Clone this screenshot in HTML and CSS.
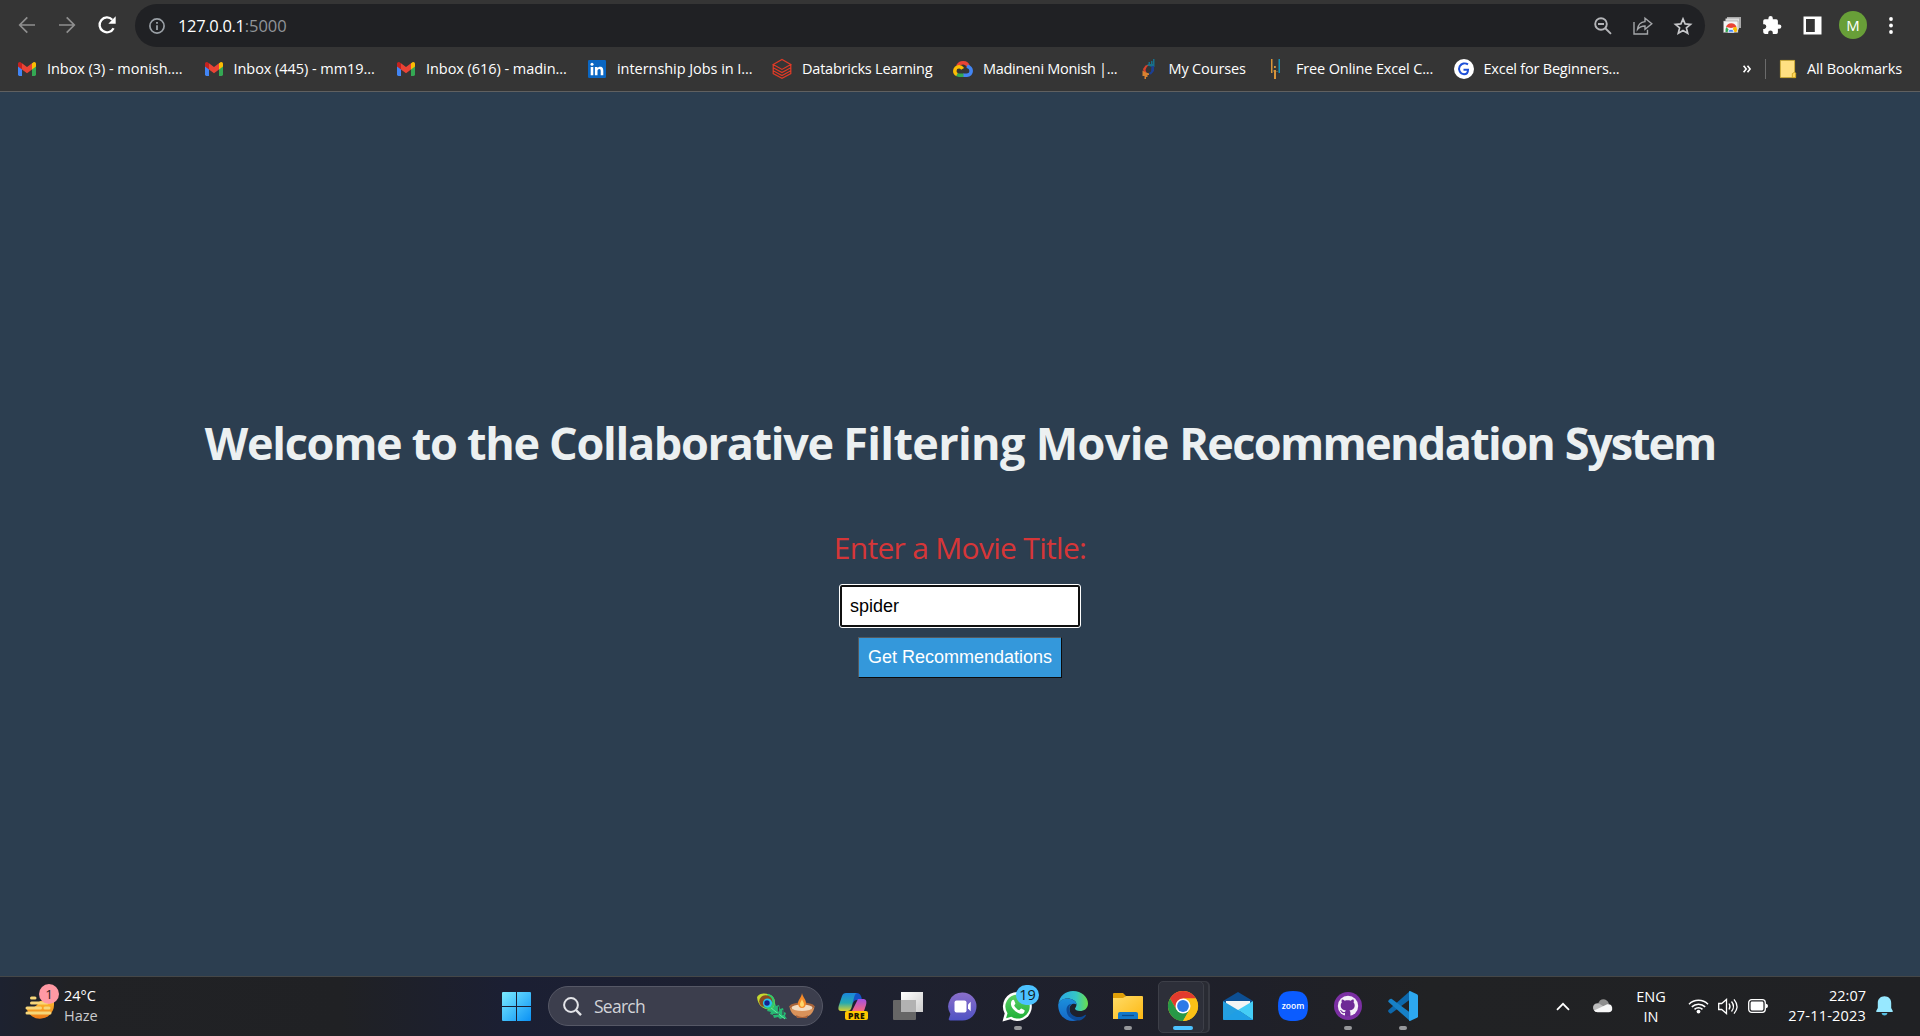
FILE: index.html
```
<!DOCTYPE html>
<html lang="en">
<head>
<meta charset="utf-8">
<title>Movie Recommendation System</title>
<link rel="stylesheet" href="styles.css">
</head>
<body>
<svg class="defs" width="0" height="0" aria-hidden="true">
  <defs>
    <symbol id="gmail" viewBox="0 0 18 14">
      <path fill="#4285f4" d="M0 3.5 4 6.5V14H1.4A1.4 1.4 0 0 1 0 12.600z"/>
      <path fill="#34a853" d="M18 3.500 14 6.500V14h2.600a1.400 1.400 0 0 0 1.400-1.400z"/>
      <path fill="#fbbc04" d="M14 1.200 15.200.4C16.500-.5 18 .4 18 1.900V4.500l-4 3z"/>
      <path fill="#ea4335" d="M4 7.500V1.200L9 5l5-3.800v6.300L9 11.200z"/>
      <path fill="#c5221f" d="M0 1.900C0 .4 1.500-.5 2.800.4L4 1.200v6.300l-4-3z"/>
    </symbol>
  </defs>
</svg>

<header class="browser">
  <div class="toolbar">
    <div class="nav">
      <svg width="18" height="18" viewBox="0 0 18 18" fill="none" stroke="#8f8f8f" stroke-width="1.7"><path d="M17 9H2M9.300 1.300 1.700 9l7.600 7.700"/></svg>
      <svg width="18" height="18" viewBox="0 0 18 18" fill="none" stroke="#8f8f8f" stroke-width="1.700"><path d="M1 9h15M8.700 1.300 16.300 9l-7.600 7.700"/></svg>
      <svg width="18" height="18" viewBox="0 0 18 18"><path d="M15.600 12.200A7.400 7.400 0 1 1 14.300 3.700" fill="none" stroke="#fff" stroke-width="2.300"/><path d="M17.700.3v7.400h-7.400z" fill="#fff"/></svg>
    </div>
    <div class="omnibox">
      <svg class="info" width="16" height="16" viewBox="0 0 16 16"><circle cx="8" cy="8" r="7.100" fill="none" stroke="#9aa0a6" stroke-width="1.700"/><path d="M7.100 7.200h1.800v4.800H7.100zM7.100 4h1.800v1.800H7.100z" fill="#9aa0a6"/></svg>
      <div class="url"><span class="host">127.0.0.1</span><span class="port">:5000</span></div>
      <div class="actions">
        <svg width="18" height="18" viewBox="0 0 18 18" fill="none" stroke="#b4b5b8" stroke-width="1.900"><circle cx="7" cy="7" r="5.800"/><path d="m11.300 11.300 5.700 5.600M4 7h6"/></svg>
        <svg width="20" height="18" viewBox="0 0 20 18" fill="none" stroke="#a4a6a9" stroke-width="1.400"><path d="M1 5v12h13.500v-4.300M4.500 12.300c.5-4.700 3-7.300 7.500-7.700V1.200L18.800 6.800 12 12.300V9c-3.500 0-5.700 1-7.500 3.300z"/></svg>
        <svg width="18" height="18" viewBox="0 0 18 18" fill="none" stroke="#c6c7ca" stroke-width="1.700"><path d="m9 1.900 2.100 5 5.400.5-4.100 3.500 1.300 5.300L9 13.400l-4.700 2.800 1.300-5.300L1.500 7.400l5.400-.5z"/></svg>
      </div>
    </div>
    <div class="extensions">
      <svg width="18" height="18" viewBox="0 0 18 18"><path fill="#aaa" d="M4 1h14v11H4z"/><path fill="#ddd" d="M2.500 2.500H16v11H2.500z"/><path fill="#f4f4f4" stroke="#888" stroke-width=".5" d="M.5 5H15v11.500H.5z"/><path fill="#ea4335" d="M3 11a5.500 5.500 0 0 1 10.500 0L8 12z"/><path fill="#34a853" d="M2.500 16a6 6 0 0 1 1-5l4 5z"/><path fill="#fbbc04" d="M8 16l3-5h2.500a6 6 0 0 1 0 5z"/><path fill="#4285f4" stroke="#fff" stroke-width=".8" d="M5 16.200a3 3 0 0 1 6 0z"/></svg>
      <svg width="18" height="18" viewBox="0 0 18 18"><path fill="#fff" d="M16.200 8.400h-1.300V5a1.700 1.700 0 0 0-1.700-1.700H9.800V2.200a2.200 2.200 0 0 0-4.400 0v1.100H1.900A1.700 1.700 0 0 0 .2 5v3.200h1.200a2.400 2.400 0 0 1 0 4.700H.2v3.200A1.800 1.800 0 0 0 2 17.900h3.200v-1.200a2.300 2.300 0 0 1 4.600 0v1.200h3.400a1.700 1.700 0 0 0 1.700-1.700v-3.400h1.300a2.200 2.200 0 0 0 0-4.400z"/></svg>
      <svg width="19" height="19" viewBox="0 0 19 19"><path fill="#fff" fill-rule="evenodd" d="M.5.500h18v18H.5zM3 3h8.800v13H3z"/></svg>
      <div class="avatar">M</div>
      <svg width="4" height="17" viewBox="0 0 4 17" fill="#fff"><circle cx="2" cy="2" r="1.900"/><circle cx="2" cy="8.500" r="1.900"/><circle cx="2" cy="15" r="1.900"/></svg>
    </div>
  </div>

  <div class="bookmarks">
    <ul class="links">
      <li><svg width="18" height="14"><use href="#gmail"/></svg><span>Inbox (3) - monish....</span></li>
      <li><svg width="18" height="14"><use href="#gmail"/></svg><span>Inbox (445) - mm19...</span></li>
      <li><svg width="18" height="14"><use href="#gmail"/></svg><span>Inbox (616) - madin...</span></li>
      <li><svg width="18" height="18" viewBox="0 0 18 18"><rect width="18" height="18" rx="1.200" fill="#0a66c2"/><g fill="#fff"><circle cx="4" cy="4.200" r="1.500"/><path d="M2.700 6.900h2.600v8.400H2.700zM6.900 6.900h2.500v1.200c.5-.8 1.400-1.400 2.700-1.400 2.700 0 3.200 1.800 3.200 4v4.600h-2.600v-4.100c0-1 0-2.200-1.400-2.200-1.300 0-1.800 1-1.800 2.200v4.100H6.900z"/></g></svg><span>internship Jobs in I...</span></li>
      <li><svg width="20" height="20" viewBox="0 0 20 20" fill="none" stroke="#e03a26" stroke-width="1.200"><path d="m1.200 5.500 8.800-5 8.800 5L10 10.400zM1.200 5.500v3.200L10 13.600l8.800-4.900V5.500M1.200 8.700v3L10 16.600l8.800-4.900v-3M1.200 11.700v2.900l8.800 4.800 8.800-4.800v-2.900"/></svg><span>Databricks Learning</span></li>
      <li><svg width="20" height="16" viewBox="0 0 20 16" fill="none" stroke-width="3.500"><path stroke="#ea4335" d="M4.700 5.200C6 2.800 8 1.700 10.300 1.800c2.300.1 4.200 1.400 4.900 3.500"/><path stroke="#4285f4" d="M14 5.200c2.500.8 4.200 2.500 4.200 4.800 0 2.500-1.700 4.200-4.200 4.200h-4"/><path stroke="#34a853" d="M10.500 14.200H6c-1 0-1.800-.2-2.500-.6"/><path stroke="#fbbc04" d="M4 13.500C2.500 12.800 1.800 11.500 1.800 10c0-2.200 1.900-4.200 4.200-4.200 1.700 0 2.800.7 3.600 2"/></svg><span>Madineni Monish |...</span></li>
      <li><svg width="20" height="20" viewBox="0 0 20 20"><path fill="#17708a" d="M9.500 3h1.500v2H9.500zM12 2h1.500v3H12zM14 0h1.500v6H14zM9 5h6.500v3L13 8l-3-1H7z"/><path fill="#1c3f93" d="M12.500 7H15v5l-3 3.500-3.500-.5 3.500-2.500z"/><path fill="#d9422b" d="M4 10l2.500-3.500L9.500 6l-2 2.500L6.500 11l1 2.500L5 14z"/><path fill="#d98230" d="M3.500 11.500 6 13l4 1.500v1.500H8.500v2H7v2H5.500v-3H3.500z"/></svg><span>My Courses</span></li>
      <li><svg width="20" height="20" viewBox="0 0 20 20"><path fill="#d9953a" d="M5 0h1.500v14H5zM8 11h2v9H8zM8 7h1.800v2H8z"/><path fill="#1791b5" d="M12.500 0H14v14h-1.500z"/><path fill="#665b43" d="M6.500 11H8v2H6.500zM10 12h2v1h-2z"/></svg><span>Free Online Excel C...</span></li>
      <li><svg width="20" height="20" viewBox="0 0 20 20"><circle cx="10" cy="10" r="10" fill="#fff"/><path d="M14 5.300C11 3.500 7.500 4.500 5.700 7.200 4 10.500 6 15 10 15.200c2.500 0 4-1.700 4-4.500H9.500" fill="none" stroke="#1d4fd7" stroke-width="2"/></svg><span>Excel for Beginners...</span></li>
    </ul>
    <svg class="overflow" width="8" height="8" viewBox="0 0 8 8" fill="none" stroke="#fff" stroke-width="1.600"><path d="m.6.700 2.600 3.300L.6 7.300M4.500.700 7.100 4 4.500 7.300"/></svg>
    <div class="all">
      <svg width="16" height="18" viewBox="0 0 16 18"><path fill="#ffe082" stroke="#d8b22e" stroke-width=".8" d="M.4.400h14.200v11.800l1 1v4.400H.4z"/><path fill="#ffd65a" stroke="#c79d16" stroke-width=".8" d="M12.300 17.600v-4l2.300-1.400 1 1v4.400z"/></svg>
      <span>All Bookmarks</span>
    </div>
  </div>
</header>

<main class="page">
  <h1>Welcome to the Collaborative <span class="loose">Filtering Movie</span> <span class="tight">Recommendation</span> <span class="tighter">System</span></h1>
  <form class="finder">
    <label for="title">Enter a Movie Title:</label>
    <input id="title" type="text" value="spider">
    <button type="button">Get Recommendations</button>
  </form>
</main>

<footer class="taskbar">
  <div class="weather">
    <div class="haze">
      <svg width="31" height="28" viewBox="0 0 31 28"><defs><linearGradient id="sun" x2="0" y2="1"><stop offset="0" stop-color="#fdbb2f"/><stop offset="1" stop-color="#ee7a16"/></linearGradient></defs><path fill="url(#sun)" d="M15 8h14v4a14 14 0 0 1-27.600 3H8l4-3z"/><path stroke="#f6d679" stroke-width="3" stroke-linecap="round" d="M6.500 5h3.500M6.500 10H22M2 15h13.500M20 15h4M2 20h23"/></svg>
      <span class="count">1</span>
    </div>
    <div class="lines"><span class="temp">24°C</span><span class="cond">Haze</span></div>
  </div>

  <div class="apps">
    <svg class="start" width="29" height="29" viewBox="0 0 29 29"><defs><linearGradient id="win" x2="1" y2="1"><stop offset="0" stop-color="#7bebff"/><stop offset="1" stop-color="#0a91f5"/></linearGradient></defs><path fill="url(#win)" d="M1 0h13v14H0V1q0-1 1-1zM15 0h13q1 0 1 1v13H15zM0 15h14v14H1q-1 0-1-1zM15 15h14v13q0 1-1 1H15z"/></svg>
    <div class="search">
      <svg width="19" height="19" viewBox="0 0 19 19" fill="none" stroke="#e3e4e8" stroke-width="2"><circle cx="8" cy="8" r="6.900"/><path d="m13 13 5 5.200" stroke-width="2.400"/></svg>
      <span>Search</span>
      <svg class="feather" width="31" height="27" viewBox="0 0 31 27"><path fill="#27b873" d="M14 9l5 1 1 3 3-1 1 4 3-1 1 4 2 1-1 3 2 3-4-1-3 1-2-2-4 1-1-3-3-1 1-2-4-1 1-2-3-2z"/><path fill="#c5d92f" d="M1 4C4-1 13 0 17 4c3 4 2 9-1 12C10 18 2 14 1 4z"/><path fill="#2fc86c" d="M12 .800c7 2 9 9 4 15.200-3 1-7 0-10-3z"/><ellipse cx="9.800" cy="8.200" rx="6.600" ry="6" fill="#8a4a1f"/><circle cx="11.500" cy="10" r="4.600" fill="#26c5e8"/><circle cx="11" cy="10" r="2.700" fill="#15208e"/><path d="m15 15 14 11" stroke="#5af09b" fill="none"/><path d="M22.500 13.500v5M27 17v5M17 21.500l6-.5" stroke="#3c3e4d" stroke-width="1.200" fill="none"/></svg>
      <svg class="diya" width="26" height="26" viewBox="0 0 26 26"><path fill="#d9925a" d="M.5 13C1 20 6 24.500 13 24.500S25 20 25.500 13z"/><path fill="#a65f38" d="M7 22c4 2.500 9 2.500 12 0l-1 3H8z"/><ellipse cx="13" cy="13.500" rx="12.500" ry="4" fill="#a96439"/><ellipse cx="13" cy="14.800" rx="10.500" ry="3.200" fill="#f3dcc1"/><path fill="#f68b29" d="M13 0c.7 4 4 6.500 4 10 0 3-1.500 5-4 5s-4-2-4-5c0-3 3.300-5 4-10z"/><path fill="#ffd76a" d="M13 6c.5 2 2 3.500 2 5.500 0 1.500-1 2.300-2 2.300s-2-.8-2-2.300C11 9.500 12.500 8 13 6z"/></svg>
    </div>
    <div class="app"><svg width="30" height="28" viewBox="0 0 30 28"><defs><linearGradient id="cp" x2="0" y2="1"><stop offset="0" stop-color="#1b86db"/><stop offset=".55" stop-color="#25a9b1"/><stop offset="1" stop-color="#d9d02f"/></linearGradient><linearGradient id="cq" x2="0" y2="1"><stop offset="0" stop-color="#a350e2"/><stop offset="1" stop-color="#f8697c"/></linearGradient></defs><path fill="#1453c5" d="M12 1h7q4 0 5 7h-5q-3 0-4 3z"/><path fill="url(#cp)" d="M8 1h11c-3 1-3 6-5 13-1 4-2 5-5 5H3c-3 0-3-3-2-6L4 4q1-3 4-3z"/><path fill="url(#cq)" d="M20 7h5c3 0 4 2 3 6l-2 6H14z"/><rect x="7" y="19" width="23" height="9" rx="2" fill="#fdc700"/><text x="18.500" y="26.600" text-anchor="middle" class="pre">PRE</text></svg></div>
    <div class="app"><svg width="30" height="28" viewBox="0 0 30 28"><defs><linearGradient id="tv" x2="1" y2="1"><stop offset="0" stop-color="#fff"/><stop offset="1" stop-color="#ccc"/></linearGradient></defs><rect y="8" width="23" height="20" rx="1" fill="#666"/><path fill="url(#tv)" d="M8 0h22v20H8z"/><path fill="#b2b2b2" d="M8 8h15v12H8z"/></svg></div>
    <div class="app"><svg width="29" height="29" viewBox="0 0 29 29"><defs><linearGradient id="ch" x2="0" y2="1"><stop offset="0" stop-color="#8a6fc9"/><stop offset="1" stop-color="#4f52c4"/></linearGradient></defs><path fill="url(#ch)" d="M14.500.500a14 14 0 1 1 0 28H2q-2-.3-1-2.300L2.400 22A14 14 0 0 1 14.500.500z"/><rect x="6.500" y="8.500" width="12" height="12" rx="2" fill="#fff"/><path fill="#fff" d="m20 12.500 2.700-2.800v9.600L20 16.500z"/></svg></div>
    <div class="app running"><svg width="31" height="31" viewBox="0 0 31 31"><defs><linearGradient id="wa" x2="0" y2="1"><stop offset="0" stop-color="#5bd066"/><stop offset="1" stop-color="#20b038"/></linearGradient></defs><path fill="#fff" d="M15.500 1a14.500 14.500 0 1 1-7 27.300L.5 30.500l2.200-8A14.500 14.500 0 0 1 15.500 1z"/><path fill="url(#wa)" d="M15.500 3.400a12.100 12.100 0 1 1-6.200 22.400l-5.200 1.400 1.400-5A12.100 12.100 0 0 1 15.500 3.400z"/><path fill="#fff" d="M10 9.500c.7-.9 1.800-.8 2.200 0l1.200 2.900c.2.800-1 1.600-1.200 2.200 1 2.200 2.800 3.700 5 4.600.7-.3 1.400-1.700 2.100-1.700l3 1.500c.7.400.2 2.600-.8 3.300-4 2.600-13.500-4.600-12.500-10.300.1-1 .4-1.900 1-2.500z"/></svg><span class="unread">19</span></div>
    <div class="app"><svg width="30" height="30" viewBox="0 0 30 30"><defs><linearGradient id="e1" x2="1"><stop offset="0" stop-color="#2aa6e8"/><stop offset=".6" stop-color="#35c6c5"/><stop offset="1" stop-color="#6adf4b"/></linearGradient><linearGradient id="e2" x2="0" y2="1"><stop offset="0" stop-color="#1b8fdc"/><stop offset="1" stop-color="#1568c6"/></linearGradient></defs><path fill="url(#e1)" d="M.3 13C1.500 5 7.500 0 15 0c8.500 0 15 6 15 12.500 0 5-4 7.500-8 7.500-3 0-5-1-5-2.500 0-.8 1.500-1.500 1.500-4C18.500 10 14 7.500 9.500 7.500S1 10 .3 13z"/><path fill="url(#e2)" d="M.2 13.500C1.500 9.500 5 7.500 9.500 7.500c5 0 9 3 9 6-3-2-7 0-7 4.500 0 6 5 10 11 9.500-2 1.500-5 2.500-7.500 2.500C6 30 0 23 .2 13.500z"/><path fill="#0d4a96" d="M13.500 13c-2 1-3 4-2 7 1.500 4 6 6.500 10.500 6 2-.3 4-1.300 5-2 .7-.4 1.200.2.800.8-1.800 2.700-4 4.200-6.300 4.600C14 30 8.500 25 8.500 19c0-3.500 2-6 5-6z"/></svg></div>
    <div class="app running"><svg width="30" height="28" viewBox="0 0 30 28"><defs><linearGradient id="fo" x2="1" y2="1"><stop offset="0" stop-color="#ffdc67"/><stop offset="1" stop-color="#fdb813"/></linearGradient></defs><path fill="#e0a008" d="M1 1h9l3 3-3 4H0V2q0-1 1-1z"/><path fill="url(#fo)" d="M0 6h10l3-2h16q1 0 1 1v22H0z"/><path fill="#1277c9" d="M5 27v-5q0-2 2-2h16q2 0 2 2v5z"/><path d="M9 23.500h12" stroke="#0a4a8c" stroke-width="1.300"/></svg></div>
    <div class="app active running"><svg width="30" height="30" viewBox="0 0 30 30"><circle cx="15" cy="15" r="15" fill="#fbc116"/><path fill="#e33b2e" d="M2 7.500A15 15 0 0 1 28 7.500H15L8.500 18.700z"/><path fill="#279847" d="M2 7.500A15 15 0 0 0 15 30l6.500-11.200H8.500z"/><path fill="#fbc116" d="M28 7.500A15 15 0 0 1 15 30l6.500-11.200L15 7.500z"/><circle cx="15" cy="15" r="7.500" fill="#fff"/><circle cx="15" cy="15" r="5.900" fill="#2d7ae8"/></svg></div>
    <div class="app"><svg width="30" height="28" viewBox="0 0 30 28"><path fill="#0d4f93" d="M0 9 15 0l15 9-15 9z"/><path fill="#f4f4f4" d="M3 9h24v4l-12 7-12-7z"/><path fill="#249fe0" d="M0 9l15 9 15 10H1q-1 0-1-1z"/><path fill="#44cdf6" d="M30 9 15 18l15 10z"/><path fill="#1f9ee5" d="M0 28l15-10 15 10z"/></svg></div>
    <div class="app"><svg width="30" height="30" viewBox="0 0 30 30"><path fill="#0b5cff" d="M15 0c11 0 15 4 15 15s-4 15-15 15S0 26 0 15 4 0 15 0z"/><text x="15" y="17.700" text-anchor="middle" class="zoom">zoom</text></svg></div>
    <div class="app running"><svg width="28" height="28" viewBox="0 0 28 28"><circle cx="14" cy="14" r="14" fill="#7b2fa3"/><circle cx="14" cy="14" r="10.200" fill="#f5f0f8"/><path fill="#6e2a96" d="M11 24.300v-3.200c-3 .7-3.700-1.300-3.700-1.300-.6-1.200-1.500-1.600-1.500-1.600 1.800-.5 2.400 1.600 3.400 1.900.9.300 1.600 0 2-.3.100-.6.400-1.100.7-1.300-3-.4-5.200-1.700-5.200-5.200 0-1.200.4-2.100 1.100-2.900-.3-.7-.4-1.700.1-2.900 1 0 2 .6 2.800 1.200 2-.5 4-.5 6 0 .8-.6 1.800-1.200 2.800-1.200.5 1.200.4 2.200.1 2.900.7.800 1.100 1.700 1.100 2.900 0 3.500-2.200 4.800-5.200 5.200.5.500.9 1.200.9 2.300v3.500c-1.700.5-3.700.5-5.400 0z"/></svg></div>
    <div class="app running"><svg width="30" height="30" viewBox="0 0 30 30"><path fill="#0d68ac" d="M22 0v8.500L3.500 22.200q-1 .7-2-.2l-1-1q-.9-1 0-2z"/><path fill="#1780c6" d="M3.500 7.800 22 21.500V30L.5 11q-.6-1 .2-1.800l1-1q.8-.8 1.800-.4z"/><path fill="#2da8f0" d="m22 0 7 3.200q1 .5 1 1.600v20.400q0 1-1 1.600L22 30q-1 .2-1-1V1q0-1.200 1-1z"/></svg></div>
  </div>

  <div class="tray">
    <svg class="chevron" width="14" height="9" viewBox="0 0 14 9" fill="none" stroke="#fff" stroke-width="1.800"><path d="m1 7.800 6-6 6 6"/></svg>
    <svg class="cloud" width="20" height="14" viewBox="0 0 20 14"><path fill="#8e8e8e" d="M5 5.500C6-1 14-1.500 16 5l-5 4z"/><path fill="#bbb" d="M4.500 13A4.400 4.400 0 1 1 6 4.500l8 5z"/><path fill="#f7f7f7" d="M4.500 13.200h11.500a4 4 0 1 0-1.700-7.900L1 11.500q1.200 1.700 3.500 1.700z"/></svg>
    <div class="lang"><span>ENG</span><span>IN</span></div>
    <svg class="wifi" width="21" height="16" viewBox="0 0 21 16" fill="none" stroke="#fff" stroke-width="1.500"><path d="M1 6.200a13.400 13.400 0 0 1 19 0M3.800 8.900a9.500 9.500 0 0 1 13.400 0M6.500 11.400a5.700 5.700 0 0 1 8 0"/><circle cx="10.500" cy="13.600" r="1.900" fill="#fff" stroke="none"/></svg>
    <svg class="volume" width="20" height="17" viewBox="0 0 20 17" fill="none" stroke="#fff" stroke-width="1.300"><path d="M.7 5.500h3L8.500 1.500v14l-4.800-4h-3zM11 5.500q2 3 0 6M13.500 3.500q4 5 0 10M16 1.300q6 7.200 0 14.400"/></svg>
    <svg class="battery" width="20" height="14" viewBox="0 0 20 14"><rect x=".7" y=".7" width="16.600" height="12.600" rx="3" fill="none" stroke="#fff" stroke-width="1.300"/><rect x="2.600" y="2.600" width="12.800" height="8.800" rx="1.300" fill="#fff"/><path fill="#fff" d="M18 4.700q2 .3 2 2.300t-2 2.300z"/></svg>
    <div class="clock"><span class="time">22:07</span><span class="date">27-11-2023</span></div>
    <svg class="bell" width="17" height="20" viewBox="0 0 17 20"><path fill="#97e8ff" d="M8.500.300c4 0 6.700 2.800 6.700 6.600v5l1.600 3q.4 1.100-.8 1.100H1q-1.200 0-.8-1.100l1.600-3v-5C1.800 3.100 4.500.300 8.500.300z"/><path fill="#55bde0" d="M5.500 17h6q-.6 2.500-3 2.500t-3-2.500z"/></svg>
  </div>
</footer>
</body>
</html>
```
FILE: styles.css
```
* {
  box-sizing: border-box;
}

body {
  margin: 0;
  height: 1036px;
  display: flex;
  flex-direction: column;
  overflow: hidden;
  background: #2c3e50;
  font-family: "Open Sans", "Noto Sans", sans-serif;
}

svg {
  display: block;
  flex: none;
  overflow: visible;
}

.defs {
  position: absolute;
}

/* Browser chrome */

.browser {
  height: 92px;
  flex: none;
  background: #353535;
  border-bottom: 1px solid #606060;
  color: #fff;
}

.toolbar {
  height: 51px;
  display: flex;
  align-items: flex-start;
  padding-top: 4px;
}

.nav {
  width: 135px;
  height: 43px;
  display: flex;
  align-items: center;
  gap: 22px;
  padding: 0 0 2px 18px;
}

.omnibox {
  width: 1570px;
  height: 43px;
  display: flex;
  align-items: center;
  padding: 0 13px 0 14px;
  border-radius: 22px;
  background: #202124;
}

.url {
  flex: 1;
  padding-left: 13px;
  font-size: 16.5px;
  line-height: 26px;
}

.host {
  letter-spacing: -0.33px;
}

.port {
  color: #909499;
}

.actions {
  display: flex;
  align-items: center;
  gap: 21px;
}

.extensions {
  height: 43px;
  display: flex;
  align-items: center;
  gap: 22px;
  padding: 0 0 1px 18px;
}

.avatar {
  width: 28px;
  height: 28px;
  margin-left: -5px;
  border-radius: 50%;
  background: #689f38;
  font-size: 15px;
  line-height: 28px;
  text-align: center;
}

.bookmarks {
  height: 36px;
  display: flex;
  align-items: center;
  padding-left: 17px;
  font-size: 14.5px;
  line-height: 20px;
  white-space: nowrap;
}

.links {
  width: 1726px;
  display: grid;
  grid-template-columns: 186.5px 192.5px 191px 185px 181px 185.5px 127.5px 187.5px 1fr;
  margin: 0;
  padding: 0;
  list-style: none;
}

.links li {
  display: grid;
  grid-template-columns: 20px 1fr;
  column-gap: 10px;
  align-items: center;
}

.links svg {
  justify-self: center;
}

.links li:nth-child(-n+4) {
  letter-spacing: -0.05px;
}

.links li:nth-child(5),
.links li:nth-child(9) {
  letter-spacing: -0.22px;
}

.links li:nth-child(6) {
  letter-spacing: -0.3px;
}

.links li:nth-child(7),
.links li:nth-child(8) {
  letter-spacing: -0.15px;
}

.all {
  height: 20px;
  display: flex;
  align-items: center;
  gap: 11px;
  margin-left: 14px;
  padding-left: 14px;
  border-left: 1px solid #6b6b6b;
  letter-spacing: -0.13px;
}

/* Page */

.page {
  height: 884px;
  flex: none;
  display: flex;
  flex-direction: column;
  align-items: center;
  padding-top: 321px;
}

h1 {
  margin: 0 0 55px;
  color: #ecf0f1;
  font-size: 45px;
  font-weight: 700;
  line-height: 60px;
  letter-spacing: -1.3px;
  white-space: nowrap;
}

.loose {
  letter-spacing: -0.65px;
}

.tight {
  letter-spacing: -1.65px;
}

.tighter {
  letter-spacing: -2.1px;
}

.finder {
  display: flex;
  flex-direction: column;
  align-items: center;
}

label {
  margin-bottom: 16px;
  color: #d63638;
  font-size: 30px;
  line-height: 40px;
  letter-spacing: -0.7px;
}

input {
  width: 240px;
  height: 42px;
  margin: 1px 0 10px;
  padding: 0 8px;
  border: 2px solid #101010;
  border-radius: 2px;
  outline: 1px solid #fff;
  background: #fff;
  color: #000;
  font: 18px "Liberation Sans", Arial, sans-serif;
}

button {
  width: 204px;
  height: 41px;
  padding: 0;
  border: 1px solid;
  border-color: #55595d #0b0b0b #0b0b0b #55595d;
  background: #3498db;
  color: #fff;
  font: 18px "Liberation Sans", Arial, sans-serif;
}

/* Taskbar */

.taskbar {
  height: 60px;
  flex: none;
  display: grid;
  grid-template-columns: 502px 929px 1fr;
  border-top: 1px solid #454748;
  background: linear-gradient(90deg, #1d2230 0, #212225 70px, #202124 340px, #1b1f33 510px, #1e2130 850px, #1f2029 1250px, #212224 1430px, #202124 1920px);
  color: #fff;
  font-size: 14.5px;
  line-height: 20px;
}

.weather {
  display: flex;
  align-items: flex-start;
  padding-left: 25px;
}

.haze {
  position: relative;
  margin-top: 16px;
}

.count {
  position: absolute;
  left: 14px;
  top: -9px;
  width: 20px;
  height: 20px;
  border-radius: 50%;
  background: #ff99a4;
  color: #2b1c20;
  font-size: 13.5px;
  text-align: center;
}

.lines,
.lang,
.clock {
  display: flex;
  flex-direction: column;
  padding-top: 9px;
}

.lines {
  margin-left: 8px;
}

.cond {
  color: #c9cacc;
}

.apps {
  display: flex;
  align-items: center;
  padding-bottom: 1px;
}

.search {
  width: 275px;
  height: 40px;
  display: flex;
  align-items: center;
  margin: 0 2px 0 17px;
  padding: 0 7px 0 14px;
  border: 1px solid #565866;
  border-radius: 20px;
  background: #3c3e4d;
}

.search span {
  flex: 1;
  padding-left: 12px;
  color: #d2d3d8;
  font-size: 17.5px;
  letter-spacing: -0.75px;
}

.diya {
  margin-left: 2px;
}

.app {
  position: relative;
  width: 55px;
  height: 58px;
  flex: none;
  display: flex;
  align-items: center;
  justify-content: center;
}

.running::after {
  content: "";
  position: absolute;
  left: 24px;
  top: 49px;
  width: 8px;
  height: 4px;
  border-radius: 2px;
  background: #97989b;
}

.active::before {
  content: "";
  position: absolute;
  left: 3px;
  top: 4px;
  width: 44px;
  height: 50px;
  border: 1px solid #3d3f48;
  border-radius: 5px;
  background: #2d2f39;
  box-shadow: 5px 0 0 -1px #292b33, 6px 0 0 0 #383a42;
}

.active svg {
  position: relative;
}

.active::after {
  left: 18px;
  width: 20px;
  background: #4cc2ff;
}

.unread {
  position: absolute;
  left: 26px;
  top: 8px;
  width: 23px;
  height: 20px;
  border-radius: 10px;
  background: #4cc2ff;
  color: #101820;
  font-size: 14.5px;
  text-align: center;
}

.pre {
  fill: #1b1600;
  font: 800 8.5px "Open Sans", sans-serif;
  letter-spacing: 0.4px;
}

.zoom {
  fill: #fff;
  font: 600 8.5px "Open Sans", sans-serif;
}

.tray {
  display: flex;
  align-items: center;
  padding: 0 0 1px 125px;
}

.cloud {
  margin-left: 23px;
}

.lang {
  width: 40px;
  align-self: flex-start;
  align-items: center;
  margin-left: 18px;
  padding-top: 10px;
}

.wifi {
  margin-left: 17px;
}

.volume {
  margin-left: 9px;
}

.battery {
  margin-left: 10px;
}

.clock {
  width: 98px;
  align-self: flex-start;
  align-items: flex-end;
}

.date {
  letter-spacing: 0.2px;
}

.bell {
  margin-left: 10px;
}
```
